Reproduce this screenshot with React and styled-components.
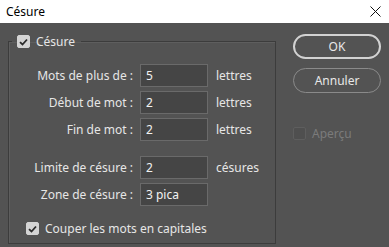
import React, { useState } from 'react';
import styled, { createGlobalStyle } from 'styled-components';

const GlobalStyle = createGlobalStyle`
  html, body {
    margin: 0;
    padding: 0;
    background: #535353;
  }
  body {
    font-family: "Noto Sans", "Liberation Sans", Arial, sans-serif;
  }
`;

const Window = styled.div`
  width: 389px;
  height: 247px;
  display: flex;
  flex-direction: column;
  background: #535353;
  overflow: hidden;
`;

const TitleBar = styled.div`
  height: 23px;
  background: #ffffff;
  display: flex;
  align-items: center;
  justify-content: space-between;
  padding: 0 7px 0 6px;
  box-sizing: border-box;
  font-size: 12px;
  color: #000;
`;

const CloseButton = styled.button`
  width: 14px;
  height: 14px;
  padding: 0;
  border: none;
  background: transparent;
  display: flex;
  align-items: center;
  justify-content: center;
`;

const Body = styled.div`
  flex: 1;
  display: flex;
  padding: 11px 8px 0 8px;
  gap: 17px;
`;

const Group = styled.fieldset`
  width: 268px;
  height: 210px;
  margin: 0;
  padding: 0;
  box-sizing: border-box;
  border: 1px solid #3c3c3c;
  box-shadow: inset 1px 1px 0 #5e5e5e;
  min-width: 0;
`;

const Legend = styled.legend`
  padding: 0 6px 0 5px;
  margin-left: 3px;
  display: flex;
  align-items: center;
  gap: 6px;
  font-size: 12px;
  line-height: 15px;
  color: #e6e6e6;
`;

const Box = styled.span`
  width: 13px;
  height: 13px;
  box-sizing: border-box;
  border-radius: 2px;
  display: inline-flex;
  align-items: center;
  justify-content: center;
  flex-shrink: 0;
  background: ${(p) => (p.$disabled ? '#4f4f4f' : '#d4d4d4')};
  border: 1px solid ${(p) => (p.$disabled ? '#5e5e5e' : '#d4d4d4')};
`;

const CheckLabel = styled.label`
  display: flex;
  align-items: center;
  gap: 6px;
  font-size: 12px;
  line-height: 15px;
  color: ${(p) => (p.$disabled ? '#7b7b7b' : '#e6e6e6')};
  cursor: default;
`;

const Fields = styled.div`
  display: grid;
  grid-template-columns: 124px 68px auto;
  column-gap: 7px;
  align-items: center;
  font-size: 12px;
  color: #e6e6e6;
`;

const Label = styled.span`
  text-align: right;
  white-space: nowrap;
`;

const Unit = styled.span`
  padding-left: 1px;
`;

const Input = styled.input`
  width: 68px;
  height: 23px;
  box-sizing: border-box;
  background: #454545;
  border: 1px solid #6a6a6a;
  color: #f2f2f2;
  font-family: inherit;
  font-size: 12px;
  padding: 0 5px;
  outline: none;
`;

const Section = styled.div`
  display: grid;
  row-gap: 4px;
  margin-top: ${(p) => p.$top}px;
`;

const FooterCheck = styled.div`
  margin: 15px 0 0 17px;
`;

const Side = styled.div`
  width: 88px;
  display: flex;
  flex-direction: column;
`;

const Button = styled.button`
  height: 25px;
  width: 88px;
  border-radius: 13px;
  background: transparent;
  font-family: inherit;
  font-size: 12px;
  color: #e8e8e8;
  border: ${(p) => (p.$primary ? '2px solid #d2d2d2' : '1px solid #8a8a8a')};
  margin-bottom: 9px;
  padding: 0;
`;

const PreviewRow = styled.div`
  margin-top: 24px;
`;

function Check({ checked, disabled, onToggle }) {
  return (
    <Box $disabled={disabled} onClick={onToggle}>
      {checked && (
        <svg width="9" height="8" viewBox="0 0 9 8">
          <path d="M1 4.2 L3.5 6.5 L8 1.5" fill="none" stroke="#2b2b2b" strokeWidth="1.8" />
        </svg>
      )}
    </Box>
  );
}

const rowsA = [
  { label: 'Mots de plus de :', value: '5', unit: 'lettres' },
  { label: 'Début de mot :', value: '2', unit: 'lettres' },
  { label: 'Fin de mot :', value: '2', unit: 'lettres' },
];

const rowsB = [
  { label: 'Limite de césure :', value: '2', unit: 'césures' },
  { label: 'Zone de césure :', value: '3 pica', unit: '' },
];

export default function App() {
  const [hyphen, setHyphen] = useState(true);
  const [caps, setCaps] = useState(true);

  const renderRows = (rows) =>
    rows.map((r) => (
      <Fields key={r.label}>
        <Label>{r.label}</Label>
        <Input defaultValue={r.value} />
        <Unit>{r.unit}</Unit>
      </Fields>
    ));

  return (
    <Window>
      <GlobalStyle />
      <TitleBar>
        <span>Césure</span>
        <CloseButton>
          <svg width="11" height="11" viewBox="0 0 11 11">
            <path d="M0.5 0.5 L10.5 10.5 M10.5 0.5 L0.5 10.5" stroke="#111" strokeWidth="1" />
          </svg>
        </CloseButton>
      </TitleBar>
      <Body>
        <Group>
          <Legend>
            <Check checked={hyphen} onToggle={() => setHyphen(!hyphen)} />
            Césure
          </Legend>
          <Section $top={15}>{renderRows(rowsA)}</Section>
          <Section $top={15}>{renderRows(rowsB)}</Section>
          <FooterCheck>
            <CheckLabel>
              <Check checked={caps} onToggle={() => setCaps(!caps)} />
              Couper les mots en capitales
            </CheckLabel>
          </FooterCheck>
        </Group>
        <Side>
          <Button $primary>OK</Button>
          <Button>Annuler</Button>
          <PreviewRow>
            <CheckLabel $disabled>
              <Check disabled />
              Aperçu
            </CheckLabel>
          </PreviewRow>
        </Side>
      </Body>
    </Window>
  );
}
